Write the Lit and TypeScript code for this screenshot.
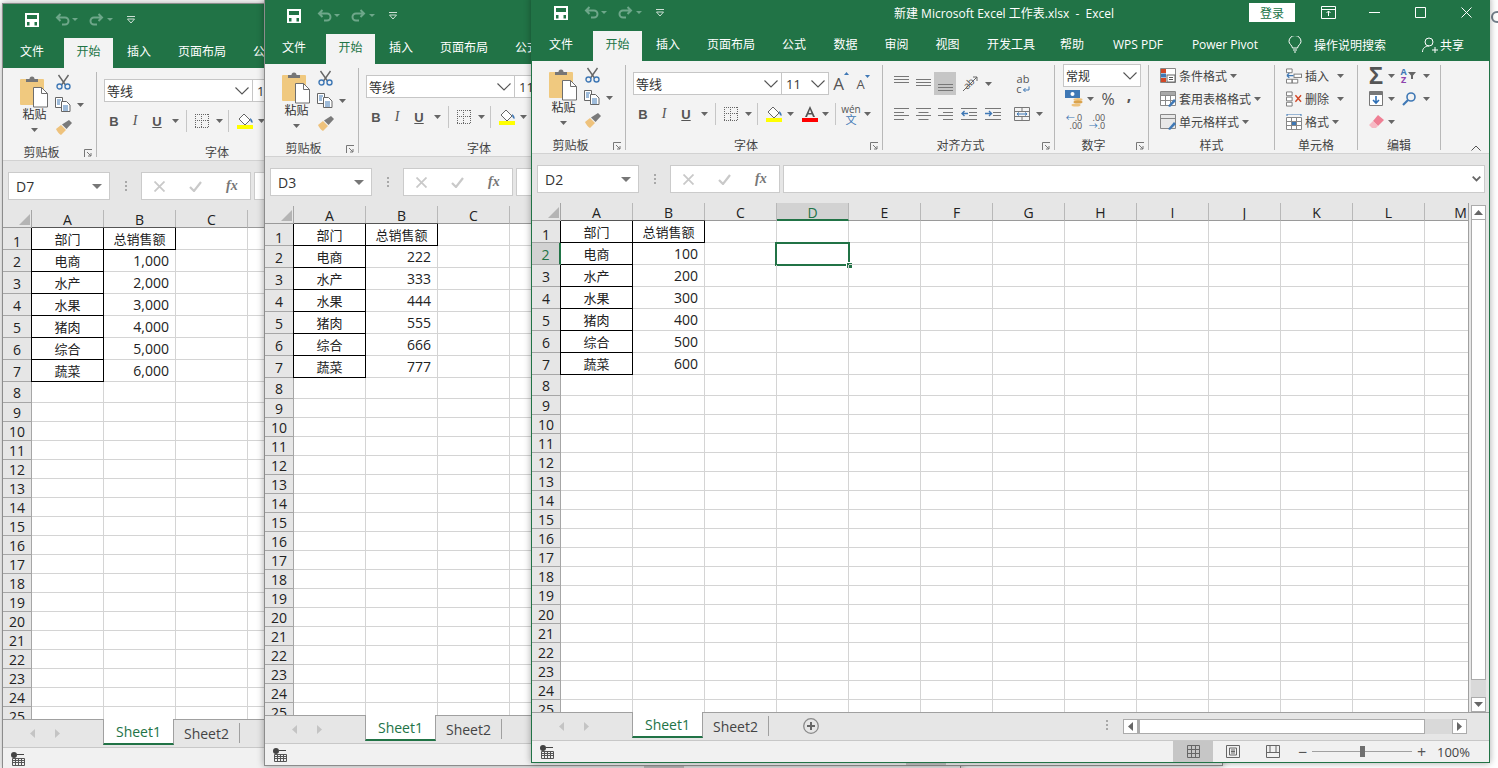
import { LitElement, html, svg, css, nothing } from "lit";
import { customElement, property } from "lit/decorators.js";

const caret = html`<svg class="caret" width="7" height="4" viewBox="0 0 7 4"><path d="M0 0h7L3.5 4z" fill="#666"/></svg>`;
const dimCaret = html`<svg width="6" height="3" viewBox="0 0 6 3"><path d="M0 0h6L3 3z" fill="#6ea78a"/></svg>`;
const chev = html`<svg width="14" height="8" viewBox="0 0 14 8"><path d="M.5.5l6.500 6.500 6.500-6.500" fill="none" stroke="#555" stroke-width="1.100"/></svg>`;
const launcher = html`<svg width="8" height="8" viewBox="0 0 8 8"><path d="M.5 8V.5H8M3 3l4 4M7 4v3H4" fill="none" stroke="#777"/></svg>`;

const ic = {
  save: html`<svg width="14" height="14" viewBox="0 0 14 14"><path fill-rule="evenodd" d="M0 0h14v14H0zM2 2v4h10V2zM2 9v3.500h2.500V9zM9.500 9v3.500H12V9z" fill="#fff"/></svg>`,
  undo: html`<svg width="15" height="13" viewBox="0 0 15 13"><path d="M5.500 1L2 4.500 5.500 8M2.500 4.500H10a3.500 3.500 0 0 1 0 7H7" fill="none" stroke="#6ea78a" stroke-width="2"/></svg>`,
  redo: html`<svg width="15" height="13" viewBox="0 0 15 13"><path d="M9.500 1L13 4.500 9.500 8M12.500 4.500H5a3.500 3.500 0 0 0 0 7h3" fill="none" stroke="#6ea78a" stroke-width="2"/></svg>`,
  custom: html`<svg width="8" height="8" viewBox="0 0 8 8"><path d="M0 .5h8" stroke="#cfe0d6"/><path d="M.5 3h7L4 7z" fill="none" stroke="#cfe0d6"/></svg>`,
  ribbonOpt: html`<svg width="15" height="13" viewBox="0 0 15 13"><path d="M.5.5h14v12H.5zM.5 3.500h14" fill="none" stroke="#fff"/><path d="M7.500 5v5M5.500 7l2-2 2 2" fill="none" stroke="#fff"/></svg>`,
  min: html`<svg width="11" height="11" viewBox="0 0 11 11"><path d="M0 5.500h11" stroke="#fff"/></svg>`,
  max: html`<svg width="11" height="11" viewBox="0 0 11 11"><path d="M.5.5h10v10H.5z" fill="none" stroke="#fff"/></svg>`,
  close: html`<svg width="11" height="11" viewBox="0 0 11 11"><path d="M.5.5l10 10M10.500.5l-10 10" stroke="#fff"/></svg>`,
  bulb: html`<svg width="14" height="17" viewBox="0 0 14 17"><path d="M4.500 12C4 9 1 8 1 5.500a6 6 0 0 1 12 0C13 8 10 9 9.500 12zM5 14h4M6 16h2" fill="none" stroke="#fff"/></svg>`,
  person: html`<svg width="16" height="16" viewBox="0 0 16 16"><circle cx="7" cy="5" r="4" fill="none" stroke="#fff"/><path d="M.5 15c0-4 3-6 6.500-6M10 13h6M13 10v6" fill="none" stroke="#fff"/></svg>`,
  paste: html`<svg width="29" height="33" viewBox="0 0 29 33"><path d="M0 5a1 1 0 0 1 1-1h22a1 1 0 0 1 1 1v25H1a1 1 0 0 1-1-1z" fill="#f0c97f"/><path d="M6 7V4h3.500a2.500 2.500 0 0 1 5 0H18v3z" fill="#767676"/><path d="M13.500 12.500h8l6 6v13.500h-14z" fill="#fff" stroke="#6e6e6e"/><path d="M21.500 12.500v6h6" fill="none" stroke="#6e6e6e"/></svg>`,
  cut: html`<svg width="15" height="16" viewBox="0 0 15 16"><path d="M2.500 1l7 10M12.500 1l-7 10" stroke="#666" stroke-width="1.400"/><circle cx="3.500" cy="12.500" r="2.500" fill="none" stroke="#3f78b5" stroke-width="1.400"/><circle cx="11.500" cy="12.500" r="2.500" fill="none" stroke="#3f78b5" stroke-width="1.400"/></svg>`,
  copy: html`<svg width="16" height="15" viewBox="0 0 16 15"><path d="M.5.500h7v10h-7z" fill="#fff" stroke="#666"/><path d="M6.500 4.500h5l3.500 3.500v6.500H6.500z" fill="#fff" stroke="#666"/><path d="M2 3h4M2 5h3M2 7h3M8 9h5M8 11h5M8 13h5" stroke="#3f78b5"/></svg>`,
  brush: html`<svg width="17" height="15" viewBox="0 0 17 15"><path d="M1 9l5-4 5 5-5 5C4 14 2 11.500 1 9z" fill="#eec27c"/><path d="M7 4.500l7-4.500 3 3-5.500 6z" fill="#7a7a7a"/></svg>`,
  border: html`<svg width="14" height="14" viewBox="0 0 14 14"><path d="M.5 0v14M13.500 0v14M6.500 0v14M0 .5h14M0 6.500h14M0 13.500h14" fill="none" stroke="#666" stroke-dasharray="1 1"/></svg>`,
  fill: html`<svg width="17" height="16" viewBox="0 0 17 16"><path d="M7 1l6 6-5 5-6-6z" fill="#fff" stroke="#666"/><path d="M13 5c2 1 3 3 2.500 5-1.500-.5-2.500-2-2.500-5z" fill="#3f78b5"/><rect y="12" width="16" height="4" fill="#ff0"/></svg>`,
  fontColor: html`<svg width="16" height="16" viewBox="0 0 16 16"><path d="M3 11L8 0l5 11h-2L10 8.500H6L5 11zM6.700 7h2.600L8 3.500z" fill="#555"/><rect y="12" width="16" height="4" fill="#f00"/></svg>`,
  tri: html`<svg width="5" height="3" viewBox="0 0 5 3"><path d="M0 3L2.500 0 5 3z" fill="#3f78b5"/></svg>`,
  triD: html`<svg width="5" height="3" viewBox="0 0 5 3"><path d="M0 0l2.500 3L5 0z" fill="#3f78b5"/></svg>`,
  orient: html`<svg width="17" height="17" viewBox="0 0 17 17"><text x="1" y="11" transform="rotate(-45 8 8)" font-size="10" font-family="Open Sans, sans-serif" fill="#555">ab</text><path d="M1 16L15 2M11 2h4v4" fill="none" stroke="#666"/></svg>`,
  wrap: html`<svg width="8" height="7" viewBox="0 0 8 7"><path d="M7 .5v3.500H1.500M3.500 2L1.500 4l2 2" fill="none" stroke="#3f78b5"/></svg>`,
  merge: html`<svg width="16" height="14" viewBox="0 0 16 14"><path d="M.5.500h15v13H.5zM.5 4.500h15M.5 9.500h15M8 .5v4M8 9.500v4" fill="none" stroke="#777"/><path d="M3 7h10M3 7l2-1.500M3 7l2 1.500M13 7l-2-1.500M13 7l-2 1.500" fill="none" stroke="#3f78b5"/></svg>`,
  money: html`<svg width="18" height="17" viewBox="0 0 18 17"><rect width="15" height="8" fill="#3f78b5"/><circle cx="7.500" cy="4" r="2" fill="#fff"/><ellipse cx="13" cy="9.500" rx="4.500" ry="1.500" fill="#eec27c"/><ellipse cx="13" cy="12" rx="4.500" ry="1.500" fill="#d9a24c"/><ellipse cx="11" cy="15" rx="4.500" ry="1.500" fill="#eec27c"/></svg>`,
  cond: html`<svg width="16" height="15" viewBox="0 0 16 15"><path d="M.5.500h15v14H.5z" fill="#fff" stroke="#888"/><rect x="1" y="1" width="5" height="4" fill="#d24726"/><rect x="1" y="5.500" width="5" height="4" fill="#3f78b5"/><rect x="1" y="10" width="5" height="4" fill="#d24726"/><rect x="7" y="7" width="8" height="7" fill="#fff" stroke="#666"/><path d="M9 9.500h4M9 11.500h4" stroke="#555"/></svg>`,
  table: html`<svg width="16" height="16" viewBox="0 0 16 16"><path d="M.5.500h15v14H.5zM.5 4.500h15M.5 9.500h15M5.500.5v14M10.500.5v14" fill="#fff" stroke="#888"/><rect x="1" y="1" width="14" height="3" fill="#a8a8a8"/><path d="M8 15l6-7 2 2-6 6z" fill="#3f78b5"/></svg>`,
  cstyle: html`<svg width="16" height="16" viewBox="0 0 16 16"><path d="M.5.500h15v14H.5zM.5 4.500h15" fill="#e8e8e8" stroke="#888"/><path d="M8 15l6-7 2 2-6 6z" fill="#3f78b5"/></svg>`,
  ins: html`<svg width="16" height="16" viewBox="0 0 17 16"><path d="M.5.500h6v4h-6zM.5 11.500h6v4h-6zM6.500 11.500h6v4h-6z" fill="#fff" stroke="#777"/><rect x="8.500" y="6" width="8" height="3.500" fill="#fff" stroke="#777"/><path d="M1 7.500h7M1 7.500l2.500-2.500M1 7.500L3.500 10" fill="none" stroke="#3f78b5" stroke-width="1.300"/></svg>`,
  del: html`<svg width="16" height="16" viewBox="0 0 17 16"><path d="M.5.500h6v4h-6zM.5 11.500h6v4h-6zM.5 6h6v4h-6z" fill="#fff" stroke="#777"/><path d="M10 4l6 7M16 4l-6 7" stroke="#d24726" stroke-width="1.500"/></svg>`,
  fmt: html`<svg width="16" height="16" viewBox="0 0 16 16"><path d="M1 0h14M1 0v2M15 0v2" stroke="#3f78b5"/><path d="M.5 3.500h15v12H.5zM.5 7.500h15M.5 11.500h15M5.500 3.500v12M10.500 3.500v12" fill="#fff" stroke="#888"/><rect x="6" y="8" width="4" height="3" fill="#3f78b5"/></svg>`,
  fillDown: html`<svg width="14" height="15" viewBox="0 0 14 15"><path d="M.5.500h13v14H.5z" fill="#fff" stroke="#777"/><rect x="1" y="1" width="12" height="3" fill="#777"/><path d="M7 5v7M4 9l3 3 3-3" fill="none" stroke="#2f6fb5" stroke-width="1.600"/></svg>`,
  sort: html`<svg width="8" height="7" viewBox="0 0 8 7"><path d="M0 0h8L5 3.500V7H3V3.500z" fill="#666"/></svg>`,
  find: html`<svg width="14" height="14" viewBox="0 0 14 14"><circle cx="9" cy="5" r="4" fill="none" stroke="#3f78b5" stroke-width="1.600"/><path d="M6 8l-5 5" stroke="#3f78b5" stroke-width="2.200"/></svg>`,
  eraser: html`<svg width="15" height="13" viewBox="0 0 15 13"><path d="M9 0l6 5-6 6-5-5z" fill="#ef7f94"/><path d="M4 6l5 5-2 2H3l-3-3z" fill="#f7b9c4"/></svg>`,
  x: html`<svg width="11" height="11" viewBox="0 0 11 11"><path d="M.5.500l10 10M10.500.5l-10 10" stroke="#c9c9c9" stroke-width="1.800"/></svg>`,
  ok: html`<svg width="13" height="11" viewBox="0 0 13 11"><path d="M1 6l4 4 7-9" fill="none" stroke="#c9c9c9" stroke-width="2.200"/></svg>`,
  macro: html`<svg width="14" height="14" viewBox="0 0 14 14"><circle cx="3" cy="3" r="3" fill="#444"/><path d="M6 2h7v1H6z" fill="#444"/><path d="M1.500 6.500h12v7h-12zM1.500 8.500h12M1.500 10.500h12M4.500 6.500v7M7.500 6.500v7M10.500 6.500v7" fill="none" stroke="#555"/></svg>`,
  plus: html`<svg width="16" height="16" viewBox="0 0 16 16"><circle cx="8" cy="8" r="7.300" fill="none" stroke="#8a8a8a" stroke-width="1.300"/><path d="M4 8h8M8 4v8" stroke="#666" stroke-width="2"/></svg>`,
  vNormal: html`<svg width="13" height="13" viewBox="0 0 13 13"><path d="M.5.500h12v12H.5zM4.500.5v12M8.500.5v12M.5 4.500h12M.5 8.500h12" fill="none" stroke="#666"/></svg>`,
  vPage: html`<svg width="14" height="13" viewBox="0 0 14 13"><path d="M.5.500h13v12H.5z" fill="none" stroke="#666"/><path d="M3.500 3h7v7h-7zM5 5h4M5 6.500h4M5 8h4" fill="none" stroke="#666"/></svg>`,
  vBreak: html`<svg width="14" height="13" viewBox="0 0 14 13"><path d="M.5.500h13v12H.5zM.5 7.500h13M4 .5v7M10 .5v7" fill="none" stroke="#666"/></svg>`,
};

const lines = (rows: [number, number][]) => html`<svg width="15" height="12" viewBox="0 0 15 12">${rows.map(([x, w], i) => svg`<path d="M${x} ${Math.round(i * 3.5) + 0.5}h${w}" stroke="#777" />`)}</svg>`;
const alignRows = (y: number) => html`<svg width="15" height="23" viewBox="0 0 15 23">${[0, 1, 2].map((i) => svg`<path d="M0 ${y + i * 3 + 0.5}h15" stroke="#777" />`)}</svg>`;
const indent = (right: boolean) => html`<svg width="16" height="12" viewBox="0 0 16 12">${[0, 1, 2, 3].map((i) => svg`<path d="M${i === 0 || i === 3 ? 0 : 8} ${Math.round(i * 3.5) + 0.5}h${i === 0 || i === 3 ? 16 : 8}" stroke="#777" />`)}<path d="${right ? "M0 5.500h6M4 3L6.500 5.500 4 8" : "M7 5.500H1M3.500 3L1 5.500 3.500 8"}" fill="none" stroke="#3f78b5" stroke-width="1.400"/></svg>`;

type Item = [number, unknown, string?];
const tool = ([w, c, cls]: Item) => html`<span class="t ${cls ?? ""}" style="width:${w}px">${c}</span>`;
const row = (items: Item[]) => html`<div class="row">${items.map(tool)}</div>`;
const sep: Item = [1, nothing, "vsep"];

const COLS = "ABCDEFGHIJKLM".split("");
const DEPTS = ["电商", "水产", "水果", "猪肉", "综合", "蔬菜"];
const TABS: [string, number][] = [
  ["文件", 61], ["开始", 49], ["插入", 52], ["页面布局", 74], ["公式", 52], ["数据", 51], ["审阅", 51], ["视图", 51],
  ["开发工具", 76], ["帮助", 46], ["WPS PDF", 86], ["Power Pivot", 88],
];
const ROWS = Array.from({ length: 25 }, (_, i) => i + 1);

@customElement("xl-window")
class XlWindow extends LitElement {
  @property() name = "";
  @property({ type: Array }) values: string[] = [];
  @property({ type: Boolean }) active = false;

  static styles = css`
    :host { display: block; width: 959px; height: 767px; box-sizing: border-box; border: 1px solid #8c8c8c; background: #f1f1f1; color: #333;
      font: 12px "Open Sans", "Noto Sans CJK SC", sans-serif; box-shadow: 0 0 7px rgba(0,0,0,.35); }
    :host([active]) { border-color: #217346; }
    svg { display: block; flex: none; }
    .title { height: 34px; background: #217346; color: #fff; display: flex; align-items: center; padding-bottom: 3px; box-sizing: border-box; }
    .qat { display: flex; align-items: center; width: 362px; flex: none; }
    .qat .t, .row .t { display: inline-flex; align-items: center; justify-content: center; flex: none; }
    .grow { flex: 1; }
    .login { width: 46px; height: 19px; background: #fff; color: #217346; display: flex; align-items: center; justify-content: center; margin-right: 10px; }
    .wbtn { width: 46px; display: flex; justify-content: center; }
    .tabs { height: 30px; background: #217346; color: #fff; display: flex; align-items: center; }
    .tab { text-align: center; height: 30px; line-height: 27px; flex: none; white-space: nowrap; box-sizing: border-box; }
    .tab:first-child { padding-right: 3px; }
    .tab.on { background: #f3f3f3; color: #217346; }
    .tab-extra { display: flex; align-items: center; flex: 1; padding-bottom: 3px; }
    .bulb { margin-left: 19px; margin-right: 12px; }
    .person { margin-left: 36px; margin-right: 2px; }
    .ribbon { height: 93px; box-sizing: border-box; background: #f3f3f3; border-bottom: 1px solid #d2d2d2; display: flex; padding-top: 4px; }
    .g { height: 85px; box-sizing: border-box; border-right: 1px solid #b8b8b8; display: flex; flex-direction: column; flex: none; }
    .g-body { height: 69px; flex: none; }
    .g-label { height: 16px; display: flex; line-height: 24px; color: #444; }
    .g-label span { flex: 1; text-align: center; }
    .launch { width: 16px; flex: none; display: flex; align-items: flex-start; justify-content: center; margin-top: 8px; }
    .g-clip { width: 94px; } .g-font { width: 257px; } .g-align { width: 172px; } .g-num { width: 94px; }
    .g-style { width: 126px; } .g-cell { width: 83px; } .g-edit { width: 83px; }
    .row { display: flex; align-items: center; height: 23px; }
    .clip { display: flex; padding-left: 17px; }
    .paste { width: 29px; padding-top: 3px; display: flex; flex-direction: column; align-items: center; }
    .paste b { font-weight: 400; line-height: 14px; }
    .paste .caret { margin-top: 6px; }
    .smalls { margin-left: 6px; margin-top: -2px; }
    .font { padding: 7px 0 0 7px; }
    .font .r2 { margin-top: 7px; height: 24px; }
    .select { height: 23px; box-sizing: border-box; background: #fff; border: 1px solid #c6c6c6; display: flex; align-items: center; justify-content: space-between; padding: 0 3px 0 2px; color: #333; flex: none; }
    .fname { width: 149px; font-size: 13px; } .fsize { width: 47px; font-size: 13px; border-left: 0; padding-left: 4px; }
    .b { font: bold 13px "Liberation Sans", sans-serif; color: #555; }
    .i { font: italic 14px "Liberation Serif", serif; color: #555; }
    .u { font: bold 13px "Liberation Sans", sans-serif; color: #555; text-decoration: underline; }
    .vsep { height: 22px; background: #c6c6c6; }
    .big { font: 17px "Open Sans", sans-serif; color: #555; display: inline-flex; align-items: flex-start; }
    .small { font-size: 13px; align-items: flex-start; }
    .wen { display: flex; flex-direction: column; align-items: center; line-height: 10px; font-size: 10px; color: #555; }
    .wen em { font-style: normal; color: #3f78b5; font-size: 11px; line-height: 11px; }
    .align { display: grid; grid-template-columns: 120px 1fr; padding: 7px 0 0 7px; }
    .align .row { height: 23px; }
    .align .r2 { margin-top: 7px; height: 24px; }
    .hl { background: #c6c6c6; height: 23px; }
    .abc { line-height: 10px; font-size: 11px; color: #555; text-align: center; display: block; }
    .abc svg { display: inline; }
    .num { padding: 0 0 0 8px; margin-top: -1px; }
    .nsel { width: 78px; font-size: 12px; border-width: 1px; }
    .pct { font-size: 16px; color: #555; }
    .comma { font-size: 16px; font-weight: 700; color: #555; margin-top: -8px; }
    .dec { font-size: 9px; line-height: 8px; color: #555; display: flex; flex-direction: column; align-items: flex-end; }
    .dec i { font-style: normal; color: #3f78b5; }
    .list { padding-left: 11px; margin-top: -1px; }
    .li { display: flex; align-items: center; height: 23px; color: #444; gap: 3px; }
    .li .wide { margin-left: 5px; }
    .edit { padding-left: 8px; margin-top: -1px; }
    .sum { font: bold 24px "Liberation Sans", sans-serif; color: #555; }
    .az { line-height: 8px; font-size: 9px; font-weight: 700; text-align: center; color: #3f78b5; }
    .az i { display: block; font-style: normal; color: #8e44ad; }
    .sortw { display: flex; align-items: center; gap: 1px; }
    .collapse { align-self: flex-end; margin-left: 30px; margin-bottom: 2px; }
    .fbar { height: 49px; background: #e6e6e6; display: flex; align-items: flex-start; padding-top: 11px; box-sizing: border-box; }
    .box { height: 28px; box-sizing: border-box; background: #fff; border: 1px solid #cbcbcb; flex: none; display: flex; align-items: center; }
    .namebox { width: 102px; margin-left: 5px; font-size: 14px; padding: 0 7px; justify-content: space-between; color: #333; }
    .dots { width: 31px; flex: none; display: flex; flex-direction: column; align-items: center; gap: 2px; padding-top: 9px; }
    .dots i, .hdots i { width: 2px; height: 2px; background: #a8a8a8; display: block; }
    .fxbox { width: 110px; gap: 24px; padding-left: 12px; }
    .fx { font: italic bold 14px "Liberation Serif", serif; color: #777; }
    .formula { width: 702px; margin-left: 3px; justify-content: flex-end; padding-right: 3px; }
    .sheetwrap { display: flex; height: 509px; background: #e6e6e6; }
    .sheet { width: 937px; flex: none; overflow: hidden; box-sizing: border-box; border-right: 1px solid #a0a0a0; background: #fff; }
    .r { display: flex; height: 19px; box-sizing: border-box; }
    .r.h { height: 18px; }
    .r.t { height: 22px; } .r.m { height: 21px; }
    .rh { width: 29px; flex: none; box-sizing: border-box; background: #e6e6e6; border-right: 1px solid #a6a6a6; border-bottom: 1px solid #a6a6a6; font-size: 14px; line-height: 1; display: flex; align-items: center; justify-content: center; color: #222; padding-top: 2px; }
    .rh.first { align-items: flex-end; padding-bottom: 0; }
    .rh.corner { align-items: flex-end; justify-content: flex-end; padding: 0 1px 2px 0; border-bottom-color: #9a9a9a; }
    .rh.on { background: #d2d2d2; color: #217346; border-right: 2px solid #217346; position: relative; z-index: 1; }
    .ch { width: 72px; flex: none; box-sizing: border-box; background: #e6e6e6; border-right: 1px solid #b8b8b8; border-bottom: 1px solid #9a9a9a; font-size: 14px; line-height: 19px; text-align: center; color: #222; overflow: hidden; }
    .ch.on { background: #d2d2d2; color: #217346; border-bottom: 2px solid #217346; }
    .c { width: 72px; flex: none; box-sizing: border-box; border-right: 1px solid #d4d4d4; border-bottom: 1px solid #d4d4d4; position: relative; font-size: 13px; display: flex; align-items: center; color: #222; }
    .c.d { border-right-color: #000; border-bottom-color: #000; }
    .c.a { justify-content: center; box-shadow: -1px 0 0 #000; }
    .c.top { box-shadow: 0 -1px 0 #555; justify-content: center; }
    .c.a.top { box-shadow: -1px 0 0 #000, 0 -1px 0 #555; }
    .c.n { justify-content: flex-end; padding-right: 6px; font-size: 14px; }
    .sel { position: absolute; left: -2px; top: -1px; right: -2px; bottom: -2px; border: 2px solid #217346; }
    .sel i { position: absolute; right: -4px; bottom: -4px; width: 5px; height: 5px; background: #217346; border: 1px solid #fff; border-right: 0; border-bottom: 0; }
    .vs { width: 15px; margin: 2px 0 0 2px; display: flex; flex-direction: column; flex: none; }
    .btn { width: 15px; height: 15px; flex: none; box-sizing: border-box; background: #fff; border: 1px solid #ababab; display: flex; align-items: center; justify-content: center; }
    .thumb-v { height: 460px; flex: none; box-sizing: border-box; background: #fff; border: 1px solid #ababab; border-top: 0; }
    .track-v { flex: 1; background: #d9d9d9; }
    .sbar { height: 29px; box-sizing: border-box; background: #e6e6e6; border-top: 1px solid #a0a0a0; border-bottom: 1px solid #c8c8c8; display: flex; align-items: flex-start; }
    .nav { width: 100px; flex: none; height: 26px; display: flex; align-items: center; gap: 20px; padding-left: 27px; box-sizing: border-box; }
    .stab { height: 25px; flex: none; box-sizing: border-box; margin-top: -1px; display: flex; align-items: center; justify-content: center; font-size: 14px; color: #444; }
    .stab.on { width: 71px; background: #fff; color: #217346; border: 1px solid #a0a0a0; border-top: 0; border-bottom: 2px solid #217346; height: 26px; }
    .stab.off { width: 66px; border-right: 1px solid #a0a0a0; margin-top: 3px; height: 20px; }
    .add { margin: 5px 0 0 34px; flex: none; }
    .hdots { margin: 7px 15px 0 auto; display: flex; flex-direction: column; gap: 2px; }
    .hs { display: flex; width: 344px; height: 15px; margin: 6px 22px 0 0; flex: none; }
    .thumb-h { width: 287px; flex: none; box-sizing: border-box; background: #fff; border: 1px solid #ababab; border-left-width: 2px; }
    .track-h { flex: 1; background: #d9d9d9; }
    .status { height: 21px; background: #f1f1f1; display: flex; align-items: center; }
    .macro { margin-left: 8px; }
    .view { width: 40px; height: 21px; flex: none; display: flex; align-items: center; justify-content: center; }
    .view.on { background: #c6c6c6; }
    .zm { width: 19px; text-align: center; flex: none; font-size: 16px; color: #555; line-height: 18px; }
    .slider { width: 100px; display: flex; align-items: center; flex: none; }
    .slider i { flex: 1; height: 1px; background: #a0a0a0; display: block; }
    .slider b { width: 5px; height: 11px; background: #6f6f6f; display: block; }
    .zp { width: 39px; margin-right: 19px; text-align: right; font-size: 13px; color: #444; flex: none; }
  `;

  private grp(cls: string, label: string, body: unknown, launch = false) {
    return html`<div class="g ${cls}"><div class="g-body">${body}</div>
      <div class="g-label"><span>${label}</span>${launch ? html`<div class="launch">${launcher}</div>` : nothing}</div></div>`;
  }

  private renderRibbon() {
    const clip = html`<div class="clip">
      <div class="paste">${ic.paste}<b>粘贴</b>${caret}</div>
      <div class="smalls">
        ${row([[16, ic.cut]])}
        ${row([[16, ic.copy], [6, nothing], [7, caret]])}
        ${row([[16, ic.brush]])}
      </div></div>`;
    const font = html`<div class="font">
      <div class="row">
        <div class="select fname">等线${chev}</div>
        <div class="select fsize">11${chev}</div>
        ${tool([24, html`<span class="big">A${ic.tri}</span>`])}
        ${tool([20, html`<span class="big small">A${ic.triD}</span>`])}
      </div>
      <div class="row r2">
        ${tool([20, html`<span class="b">B</span>`])}${tool([22, html`<span class="i">I</span>`])}${tool([22, html`<span class="u">U</span>`])}
        ${tool([14, caret])}${tool([4, nothing])}${tool(sep)}${tool([3, nothing])}
        ${tool([24, ic.border])}${tool([10, caret])}${tool([4, nothing])}${tool(sep)}${tool([5, nothing])}
        ${tool([22, ic.fill])}${tool([10, caret])}${tool([4, nothing])}
        ${tool([22, ic.fontColor])}${tool([8, caret])}${tool([6, nothing])}${tool(sep)}${tool([5, nothing])}
        ${tool([20, html`<span class="wen">wén<em>文</em></span>`])}${tool([12, caret])}
      </div></div>`;
    const align = html`<div class="align">
      <div>
        ${row([[22, alignRows(4)], [22, alignRows(7)], [22, alignRows(12), "hl"], [28, ic.orient], [8, caret]])}
        <div class="row r2">
          ${tool([22, lines([[0, 15], [0, 10], [0, 15], [0, 10]])])}${tool([22, lines([[0, 15], [2.5, 10], [0, 15], [2.5, 10]])])}${tool([22, lines([[0, 15], [5, 10], [0, 15], [5, 10]])])}
          ${tool([26, indent(false)])}${tool([22, indent(true)])}
        </div>
      </div>
      <div>
        ${row([[26, html`<span class="abc">ab<br />c${ic.wrap}</span>`]])}
        <div class="row r2">${tool([24, ic.merge])}${tool([10, caret])}</div>
      </div></div>`;
    const num = html`<div class="num">
      <div class="select nsel">常规${chev}</div>
      ${row([[22, ic.money], [10, caret], [26, html`<span class="pct">%</span>`], [16, html`<span class="comma">,</span>`]])}
      ${row([
        [22, html`<span class="dec"><span><i>←</i>.0</span><span>.00</span></span>`],
        [24, html`<span class="dec"><span>.00</span><span><i>→</i>.0</span></span>`],
      ])}</div>`;
    const li = (icon: unknown, text: string, wide = false) => html`<div class="li">${icon}<span>${text}</span><span class=${wide ? "wide" : ""}>${caret}</span></div>`;
    const style = html`<div class="list">${li(ic.cond, "条件格式")}${li(ic.table, "套用表格格式")}${li(ic.cstyle, "单元格样式")}</div>`;
    const cell = html`<div class="list">${li(ic.ins, "插入", true)}${li(ic.del, "删除", true)}${li(ic.fmt, "格式")}</div>`;
    const edit = html`<div class="edit">
      ${row([[20, html`<span class="sum">Σ</span>`], [10, caret], [24, html`<span class="sortw"><span class="az">A<i>Z</i></span>${ic.sort}</span>`], [12, caret]])}
      ${row([[20, ic.fillDown], [10, caret], [26, ic.find], [8, caret]])}
      ${row([[20, ic.eraser], [10, caret]])}</div>`;
    return html`<div class="ribbon">
      ${this.grp("g-clip", "剪贴板", clip, true)}
      ${this.grp("g-font", "字体", font, true)}
      ${this.grp("g-align", "对齐方式", align, true)}
      ${this.grp("g-num", "数字", num, true)}
      ${this.grp("g-style", "样式", style)}
      ${this.grp("g-cell", "单元格", cell)}
      ${this.grp("g-edit", "编辑", edit)}
      <div class="collapse"><svg width="10" height="6" viewBox="0 0 10 6"><path d="M.5 5.500L5 1l4.500 4.500" fill="none" stroke="#555"/></svg></div>
    </div>`;
  }

  private renderSheet() {
    const rowCls = (n: number) => (n <= 7 ? "t" : n === 8 ? "m" : "");
    return html`<div class="sheet">
      <div class="r h">
        <div class="rh corner"><svg width="11" height="11" viewBox="0 0 11 11"><path d="M11 0v11H0z" fill="#b4b4b4"/></svg></div>
        ${COLS.map((c) => html`<div class="ch ${this.active && c === "D" ? "on" : ""}">${c}</div>`)}
      </div>
      ${ROWS.map((n) => html`<div class="r ${rowCls(n)}">
        <div class="rh ${n === 1 ? "first" : ""} ${this.active && n === 2 ? "on" : ""}">${n}</div>
        ${COLS.map((c) => {
          if (n <= 7 && c === "A") return html`<div class="c d a ${n === 1 ? "top" : ""}">${n === 1 ? "部门" : DEPTS[n - 2]}</div>`;
          if (n === 1 && c === "B") return html`<div class="c d top">总销售额</div>`;
          if (n <= 7 && c === "B") return html`<div class="c n">${this.values[n - 2]}</div>`;
          if (this.active && n === 2 && c === "D") return html`<div class="c"><div class="sel"><i></i></div></div>`;
          return html`<div class="c"></div>`;
        })}
      </div>`)}
    </div>`;
  }

  render() {
    return html`
      <div class="title">
        <div class="qat">
          ${tool([22, nothing])}${tool([14, ic.save])}${tool([15, nothing])}${tool([16, ic.undo])}${tool([10, dimCaret])}${tool([9, nothing])}
          ${tool([15, ic.redo])}${tool([12, dimCaret])}${tool([11, nothing])}${tool([8, ic.custom])}
        </div>
        <span>新建 Microsoft Excel 工作表.xlsx&nbsp;&nbsp;-&nbsp;&nbsp;Excel</span>
        <div class="grow"></div>
        <div class="login">登录</div>
        <div class="wbtn">${ic.ribbonOpt}</div>
        <div class="wbtn">${ic.min}</div>
        <div class="wbtn">${ic.max}</div>
        <div class="wbtn">${ic.close}</div>
      </div>
      <div class="tabs">
        ${TABS.map(([t, w]) => html`<div class="tab ${t === "开始" ? "on" : ""}" style="width:${w}px">${t}</div>`)}
        <div class="tab-extra">
          <span class="bulb">${ic.bulb}</span><span>操作说明搜索</span>
          <span class="person">${ic.person}</span><span>共享</span>
        </div>
      </div>
      ${this.renderRibbon()}
      <div class="fbar">
        <div class="box namebox">${this.name}<svg width="10" height="5" viewBox="0 0 10 5"><path d="M0 0h10L5 5z" fill="#777"/></svg></div>
        <div class="dots"><i></i><i></i><i></i></div>
        <div class="box fxbox">${ic.x}${ic.ok}<span class="fx">fx</span></div>
        <div class="box formula"><svg width="9" height="6" viewBox="0 0 9 6"><path d="M.7.700L4.500 4.500 8.300.7" fill="none" stroke="#666" stroke-width="1.800"/></svg></div>
      </div>
      <div class="sheetwrap">
        ${this.renderSheet()}
        <div class="vs">
          <div class="btn"><svg width="9" height="5" viewBox="0 0 9 5"><path d="M0 5L4.500 0 9 5z" fill="#666"/></svg></div>
          <div class="thumb-v"></div>
          <div class="track-v"></div>
          <div class="btn"><svg width="9" height="5" viewBox="0 0 9 5"><path d="M0 0l4.500 5L9 0z" fill="#666"/></svg></div>
        </div>
      </div>
      <div class="sbar">
        <div class="nav">
          <svg width="5" height="9" viewBox="0 0 5 9"><path d="M5 0v9L0 4.500z" fill="#c4c4c4"/></svg>
          <svg width="5" height="9" viewBox="0 0 5 9"><path d="M0 0v9l5-4.500z" fill="#c4c4c4"/></svg>
        </div>
        <div class="stab on">Sheet1</div>
        <div class="stab off">Sheet2</div>
        <div class="add">${ic.plus}</div>
        <div class="hdots"><i></i><i></i><i></i></div>
        <div class="hs">
          <div class="btn"><svg width="5" height="9" viewBox="0 0 5 9"><path d="M5 0v9L0 4.500z" fill="#666"/></svg></div>
          <div class="thumb-h"></div>
          <div class="track-h"></div>
          <div class="btn"><svg width="5" height="9" viewBox="0 0 5 9"><path d="M0 0v9l5-4.500z" fill="#666"/></svg></div>
        </div>
      </div>
      <div class="status">
        <div class="macro">${ic.macro}</div>
        <div class="grow"></div>
        <div class="view on">${ic.vNormal}</div>
        <div class="view">${ic.vPage}</div>
        <div class="view">${ic.vBreak}</div>
        <div class="zm">−</div>
        <div class="slider"><i></i><b></b><i></i></div>
        <div class="zm">+</div>
        <div class="zp">100%</div>
      </div>
    `;
  }
}

@customElement("app-root")
export class AppRoot extends LitElement {
  static styles = css`
    :host { display: block; width: 1498px; height: 768px; overflow: hidden; position: relative; background: #fff; }
    .w1 { position: absolute; left: 2px; top: 3px; }
    .w2 { position: absolute; left: 264px; top: -1px; }
    .w3 { position: absolute; left: 531px; top: -4px; }
    .behind { position: absolute; left: 1491px; top: 11px; width: 12px; height: 12px; border-radius: 50%; border: 2px solid #75808c; box-sizing: border-box; }
  `;
  render() {
    return html`
      <div class="behind"></div>
      <xl-window class="w1" name="D7" .values=${["1,000", "2,000", "3,000", "4,000", "5,000", "6,000"]}></xl-window>
      <xl-window class="w2" name="D3" .values=${["222", "333", "444", "555", "666", "777"]}></xl-window>
      <xl-window class="w3" active name="D2" .values=${["100", "200", "300", "400", "500", "600"]}></xl-window>
    `;
  }
}
